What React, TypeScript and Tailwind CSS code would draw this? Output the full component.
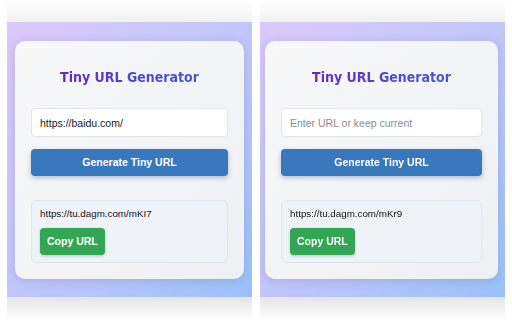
import React from "react";

type PanelProps = {
  value?: string;
  placeholder: string;
  shortUrl: string;
  blurred?: boolean;
};

function Panel({ value, placeholder, shortUrl, blurred }: PanelProps) {
  return (
    <div className={"flex w-[245px] flex-col " + (blurred ? "blur-[0.5px]" : "")}>
      <div className="h-[22px] bg-gradient-to-b from-white to-[#f1f1f3]" />
      <div
        className={
          "h-[275px] bg-gradient-to-br from-[#dac8fa] via-[#c2c6fa] to-[#98c2f8] pt-[19px] " +
          (blurred ? "pl-[5px] pr-[7px]" : "px-[8px]")
        }
      >
        <div className="flex h-[238px] flex-col rounded-[10px] bg-gradient-to-br from-[#f8f8f9] to-[#eef0f3] px-4 pt-[28px] shadow-[0_2px_10px_rgba(60,60,120,0.18)]">
          <h1 className="bg-gradient-to-r from-[#6419c6] to-[#3a5cd8] bg-clip-text text-center font-['DejaVu_Sans_Condensed','DejaVu_Sans',sans-serif] text-[14px] leading-[17px] font-bold text-transparent">
            Tiny URL Generator
          </h1>
          <input
            className="mt-[22px] h-[29px] w-full rounded-[4px] border border-[#e3e5e9] bg-white px-[8px] font-['Liberation_Sans',Arial,sans-serif] text-[10.5px] text-[#1a1a1a] outline-none placeholder:text-[#8a8d92]"
            defaultValue={value}
            placeholder={placeholder}
          />
          <button className="mt-[12px] h-[27px] w-full rounded-[4px] bg-[#3878bd] font-['Liberation_Sans',Arial,sans-serif] text-[10.5px] font-bold text-white shadow-[0_2px_5px_rgba(30,60,110,0.3)]">
            Generate Tiny URL
          </button>
          <div className="mt-[24px] flex h-[63px] flex-col items-start rounded-[6px] border border-[#e1e5ec] bg-[#eff3f9] px-[8px] pt-[7px]">
            <div className="font-['Liberation_Sans',Arial,sans-serif] text-[9.8px] leading-[12px] text-[#111]">
              {shortUrl}
            </div>
            <button className="mt-[8px] h-[27px] rounded-[4px] bg-[#33a654] px-[7px] font-['Liberation_Sans',Arial,sans-serif] text-[10.5px] font-bold text-white shadow-[0_1px_3px_rgba(0,0,0,0.2)]">
              Copy URL
            </button>
          </div>
        </div>
      </div>
      <div className="h-[23px] bg-gradient-to-b from-[#e4e4e6] to-white" />
    </div>
  );
}

export default function App() {
  return (
    <div className="flex h-[320px] w-[512px] gap-[8px] overflow-hidden bg-white pl-[7px]">
      <Panel value="https://baidu.com/" placeholder="Enter URL or keep current" shortUrl="https://tu.dagm.com/mKI7" />
      <Panel placeholder="Enter URL or keep current" shortUrl="https://tu.dagm.com/mKr9" blurred />
    </div>
  );
}
